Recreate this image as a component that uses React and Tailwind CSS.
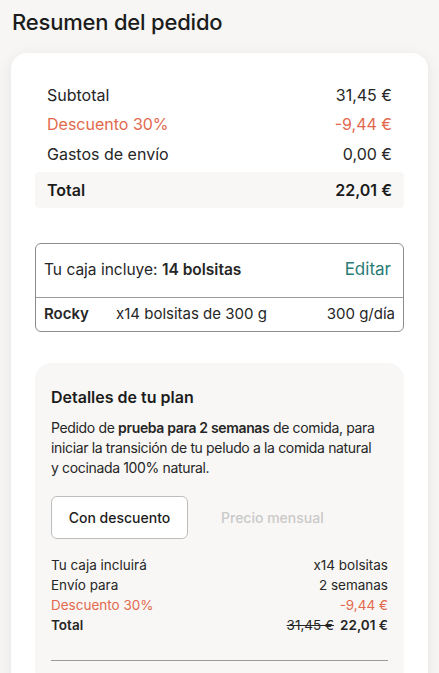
import React from 'react';

export default function App() {
  const summary = [
    { label: 'Subtotal', value: '31,45 €' },
    { label: 'Descuento 30%', value: '-9,44 €', accent: true },
    { label: 'Gastos de envío', value: '0,00 €' },
  ];

  return (
    <div className="min-h-screen bg-[#f7f6f4] px-[11px] pt-[6px] text-[#1c1c1c]" style={{ fontFamily: 'Inter, "Noto Sans", sans-serif' }}>
      <h1 className="text-[22px] font-medium leading-[32px] pl-px tracking-[-0.2px]">Resumen del pedido</h1>

      <div className="mt-[15px] bg-white rounded-2xl shadow-[0_4px_16px_rgba(0,0,0,0.08)] px-6 pt-[27px] pb-10">
        {/* Totals */}
        <div>
          {summary.map((row) => (
            <div
              key={row.label}
              className={`flex justify-between px-3 h-[29.5px] items-center text-[16px] ${row.accent ? 'text-[#e2694d]' : 'text-[#262626]'}`}
            >
              <span>{row.label}</span>
              <span>{row.value}</span>
            </div>
          ))}
          <div className="flex justify-between items-center px-3 h-9 mt-[3px] bg-[#f8f7f5] rounded text-[16px] font-semibold">
            <span>Total</span>
            <span>22,01 €</span>
          </div>
        </div>

        {/* Box */}
        <div className="mt-[35px] border border-[#8c8c8c] rounded-md">
          <div className="flex justify-between items-center h-[54px] pl-2 pr-3 border-b border-[#9a9a9a]">
            <span className="text-[15.5px] text-[#262626]">
              Tu caja incluye: <span className="font-semibold">14 bolsitas</span>
            </span>
            <span className="text-[17px] text-[#2a7b76]">Editar</span>
          </div>
          <div className="flex items-center h-[33px] pl-2 pr-2 text-[15px] text-[#262626]">
            <span className="font-semibold w-[72px]">Rocky</span>
            <span className="flex-1">x14 bolsitas de 300 g</span>
            <span>300 g/día</span>
          </div>
        </div>

        {/* Plan details */}
        <div className="mt-[31px] bg-[#f8f7f5] rounded-2xl px-4 pt-[22px] pb-6">
          <h2 className="text-[16px] font-semibold leading-6">Detalles de tu plan</h2>
          <p className="mt-[9px] pr-3 text-[14px] leading-5 tracking-[-0.35px] text-[#262626]">
            Pedido de <span className="font-semibold">prueba para 2 semanas</span> de comida, para iniciar la transición de tu peludo a la comida natural y cocinada 100% natural.
          </p>

          <div className="mt-[18px] flex items-center">
            <button className="w-[137px] h-[43px] bg-white border border-[#bdbdbd] rounded-md text-[14px] font-medium text-[#1c1c1c]">
              Con descuento
            </button>
            <span className="ml-[33px] text-[14px] font-medium text-[#c9c9c9]">Precio mensual</span>
          </div>

          <div className="mt-4 text-[13.5px] leading-5 text-[#262626]">
            <div className="flex justify-between">
              <span>Tu caja incluirá</span>
              <span>x14 bolsitas</span>
            </div>
            <div className="flex justify-between">
              <span>Envío para</span>
              <span>2 semanas</span>
            </div>
            <div className="flex justify-between text-[#e2694d]">
              <span>Descuento 30%</span>
              <span>-9,44 €</span>
            </div>
            <div className="flex justify-between font-semibold">
              <span>Total</span>
              <span>
                <span className="line-through font-normal mr-[6px]">31,45 €</span>22,01 €
              </span>
            </div>
          </div>

          <div className="mt-[25px] border-t border-[#9a9a9a]" />
        </div>
      </div>
    </div>
  );
}
